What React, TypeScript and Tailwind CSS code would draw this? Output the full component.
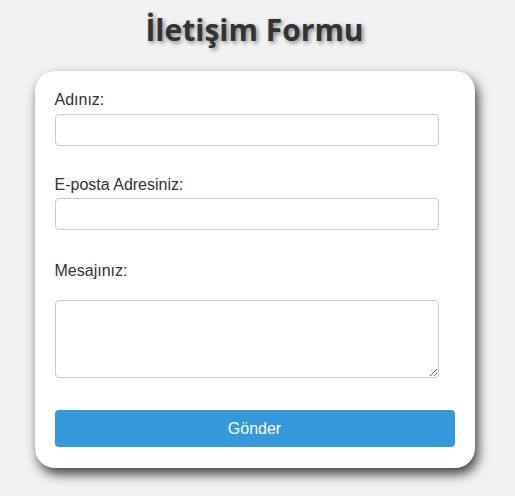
export default function App() {
    return (
        <div className="min-h-screen bg-[#f1f2f4] pr-[6px] font-['Liberation_Sans',Arial,sans-serif] text-[#333]">
            <h1 className="pt-[10px] text-center font-['Open_Sans',sans-serif] text-[30px] font-bold leading-[40px] text-[#333] [text-shadow:2px_2px_4px_rgba(0,0,0,0.45)]">
                İletişim Formu
            </h1>
            <form className="mx-auto mt-[21px] w-[440px] rounded-[20px] bg-white px-5 pt-5 pb-[21px] shadow-[3px_6px_12px_rgba(0,0,0,0.75)]">
                <label className="block text-base leading-[18px]">Adınız:</label>
                <input type="text" className="mt-[5px] block h-8 w-[384px] rounded border border-[#ccc]" />

                <label className="mt-[30px] block text-base leading-[18px]">E-posta Adresiniz:</label>
                <input type="email" className="mt-[4px] block h-8 w-[384px] rounded border border-[#ccc]" />

                <label className="mt-[32px] block text-base leading-[18px]">Mesajınız:</label>
                <textarea className="mt-[20px] block h-[78px] w-[384px] rounded border border-[#ccc]" />

                <button type="button" className="mt-8 block h-[37px] w-[400px] rounded bg-[#3498db] text-base text-white">
                    Gönder
                </button>
            </form>
        </div>
    )
}
